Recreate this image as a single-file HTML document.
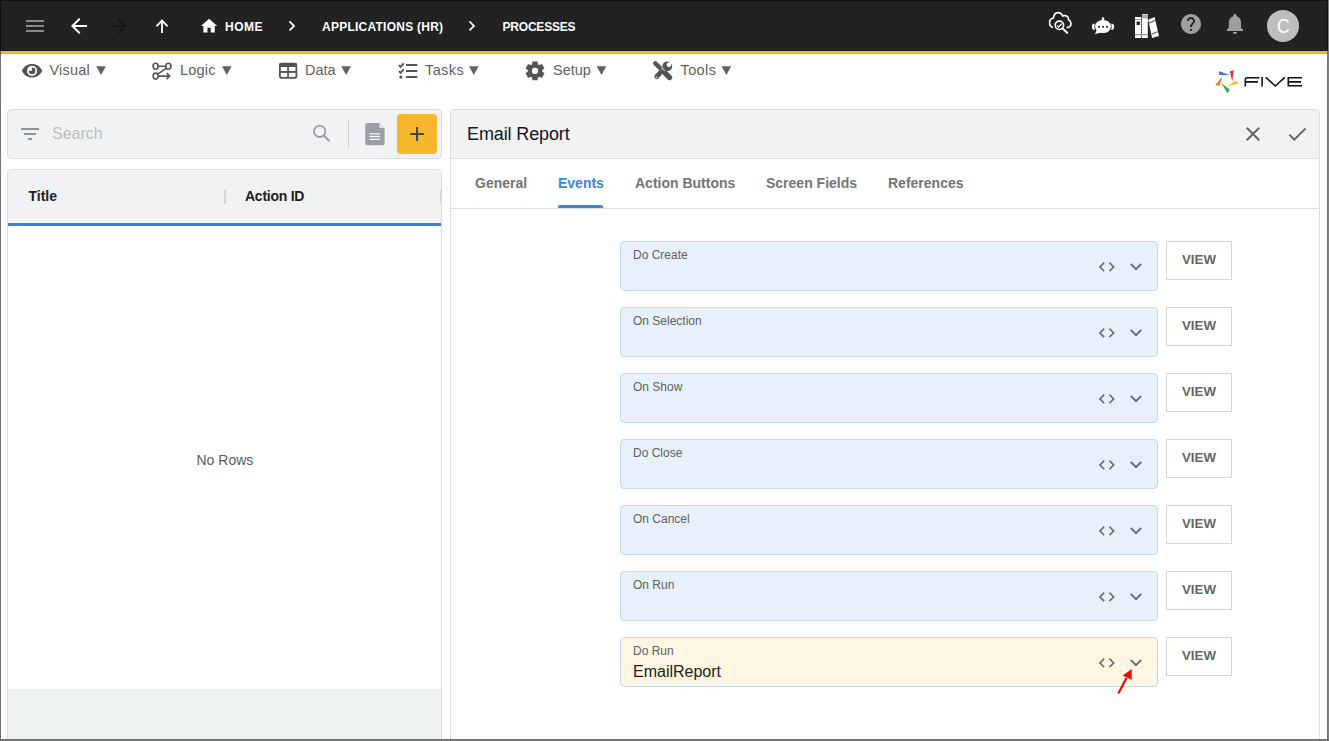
<!DOCTYPE html>
<html><head><meta charset="utf-8">
<style>
*{margin:0;padding:0;box-sizing:border-box}
html,body{width:1329px;height:741px;overflow:hidden;background:#fff;font-family:"Liberation Sans",sans-serif}
.a{position:absolute}
.t{position:absolute;white-space:nowrap;line-height:1}
svg{position:absolute;overflow:visible}
.ov{left:0;top:0}
#hdr{left:0;top:0;width:1329px;height:51px;background:#222}
#hline{left:0;top:50px;width:1329px;height:1px;background:#141820}
#obar{left:0;top:51px;width:1329px;height:3px;background:linear-gradient(#fdbf29,#f2ad18)}
.crumb{color:#fff;font-weight:bold;font-size:12px;top:20.5px}
.menu{color:#616161;font-size:14.5px;top:62.5px}
.field{left:620px;width:538px;height:50px;border:1px solid #c6d9ec;border-radius:4px;background:#e8f1fb}
.flab{left:633px;font-size:12px;color:#616161}
.view{left:1166px;width:66px;height:39px;border:1px solid #d6d6d6;background:#fff}
.vtxt{left:1182px;font-size:13.3px;font-weight:bold;color:#666}
.tab{font-size:14px;font-weight:bold;color:#757575;top:175.5px}
</style></head><body>
<!-- header -->
<div id="hdr" class="a"></div>
<div id="hline" class="a"></div>
<div id="obar" class="a"></div>

<div class="t crumb" style="left:225px;letter-spacing:0.5px">HOME</div>
<div class="t crumb" style="left:322px;letter-spacing:0.25px">APPLICATIONS (HR)</div>
<div class="t crumb" style="left:502.5px;letter-spacing:-0.2px">PROCESSES</div>

<!-- menu -->
<div class="t menu" style="left:49.5px;letter-spacing:0.2px">Visual</div>
<div class="t menu" style="left:180px;letter-spacing:0.2px">Logic</div>
<div class="t menu" style="left:305px">Data</div>
<div class="t menu" style="left:425px;letter-spacing:0.4px">Tasks</div>
<div class="t menu" style="left:553px">Setup</div>
<div class="t menu" style="left:680.5px;letter-spacing:0.4px">Tools</div>

<!-- left panel -->
<div class="a" style="left:7px;top:109px;width:435px;height:50px;background:#f1f2f4;border:1px solid #dcdde0;border-radius:4px"></div>
<div class="t" style="left:52px;top:125.5px;font-size:16px;color:#bdbdbd">Search</div>
<div class="a" style="left:348px;top:120px;width:1px;height:28px;background:#d0d0d0"></div>
<div class="a" style="left:397px;top:114px;width:40px;height:40px;background:#f7b72d;border-radius:4px"></div>

<div class="a" style="left:7px;top:169px;width:435px;height:580px;border:1px solid #dcdde0;border-radius:4px 4px 0 0;background:#fff"></div>
<div class="a" style="left:8px;top:170px;width:433px;height:53px;background:#f1f2f4;border-radius:3px 3px 0 0"></div>
<div class="a" style="left:8px;top:223px;width:433px;height:3px;background:#3b82d4"></div>
<div class="t" style="left:28.5px;top:188.7px;font-size:14px;font-weight:bold;color:#212121">Title</div>
<div class="a" style="left:224px;top:190px;width:2px;height:14px;background:#d5d6d8"></div>
<div class="t" style="left:245px;top:188.7px;font-size:14px;font-weight:bold;color:#212121;letter-spacing:-0.25px">Action ID</div>
<div class="a" style="left:440px;top:190px;width:1px;height:14px;background:#d5d6d8"></div>
<div class="t" style="left:196.5px;top:453px;font-size:14px;color:#5c5c5c">No Rows</div>
<div class="a" style="left:8px;top:689px;width:433px;height:60px;background:#eef2f3"></div>

<!-- right panel -->
<div class="a" style="left:450px;top:109px;width:870px;height:640px;border:1px solid #dcdde0;border-radius:4px 4px 0 0;background:#fff"></div>
<div class="a" style="left:451px;top:110px;width:868px;height:48px;background:#f1f2f4;border-radius:3px 3px 0 0"></div>
<div class="a" style="left:451px;top:158px;width:868px;height:1px;background:#dcdde0"></div>
<div class="a" style="left:451px;top:208px;width:868px;height:1px;background:#dcdde0"></div>
<div class="t" style="left:467px;top:125px;font-size:18px;color:#111827;letter-spacing:-0.12px">Email Report</div>

<div class="t tab" style="left:475px">General</div>
<div class="a" style="left:476.5px;top:204px;width:1px;height:1px;background:#cfe0f5"></div><div class="a" style="left:523.5px;top:204px;width:1px;height:1px;background:#cfe0f5"></div>
<div class="t tab" style="left:558px;color:#3d85d8">Events</div>
<div class="a" style="left:558px;top:205px;width:45px;height:3px;background:#3d85d8;border-radius:2px 2px 0 0"></div>
<div class="t tab" style="left:635px">Action Buttons</div>
<div class="t tab" style="left:766px">Screen Fields</div>
<div class="t tab" style="left:888px">References</div>

<!-- fields -->
<div class="a field" style="top:241px;background:#e8f1fb"></div>
<div class="t flab" style="top:248.7px">Do Create</div>
<div class="a view" style="top:241px"></div>
<div class="t vtxt" style="top:252.9px">VIEW</div>
<div class="a field" style="top:307px;background:#e8f1fb"></div>
<div class="t flab" style="top:314.7px">On Selection</div>
<div class="a view" style="top:307px"></div>
<div class="t vtxt" style="top:318.9px">VIEW</div>
<div class="a field" style="top:373px;background:#e8f1fb"></div>
<div class="t flab" style="top:380.7px">On Show</div>
<div class="a view" style="top:373px"></div>
<div class="t vtxt" style="top:384.9px">VIEW</div>
<div class="a field" style="top:439px;background:#e8f1fb"></div>
<div class="t flab" style="top:446.7px">Do Close</div>
<div class="a view" style="top:439px"></div>
<div class="t vtxt" style="top:450.9px">VIEW</div>
<div class="a field" style="top:505px;background:#e8f1fb"></div>
<div class="t flab" style="top:512.7px">On Cancel</div>
<div class="a view" style="top:505px"></div>
<div class="t vtxt" style="top:516.9px">VIEW</div>
<div class="a field" style="top:571px;background:#e8f1fb"></div>
<div class="t flab" style="top:578.7px">On Run</div>
<div class="a view" style="top:571px"></div>
<div class="t vtxt" style="top:582.9px">VIEW</div>
<div class="a field" style="top:637px;background:#fef5e3"></div>
<div class="t flab" style="top:644.7px">Do Run</div>
<div class="a view" style="top:637px"></div>
<div class="t vtxt" style="top:648.9px">VIEW</div>
<div class="t" style="left:633px;top:663.5px;font-size:16px;color:#212121">EmailReport</div>

<svg class="ov" width="1329" height="741" viewBox="0 0 1329 741"><rect x="26" y="20" width="18" height="2" fill="#8a8a8a"/>
<rect x="26" y="25" width="18" height="2" fill="#8a8a8a"/>
<rect x="26" y="30" width="18" height="2" fill="#8a8a8a"/>
<path transform="translate(67,14)" d="M20 11H7.83l5.59-5.59L12 4l-8 8 8 8 1.41-1.41L7.83 13H20v-2z" fill="#fff"/>
<path transform="translate(107,14)" d="M12 4l-1.41 1.41L16.17 11H4v2h12.17l-5.58 5.59L12 20l8-8z" fill="#161616"/>
<path d="M162 33V20.6M156.4 26.3L162 20.6L167.6 26.3" fill="none" stroke="#fff" stroke-width="1.8"/>
<path transform="translate(199.3,16.25) scale(0.815)" d="M10 20v-6h4v6h5v-8h3L12 3 2 12h3v8z" fill="#fff"/>
<path transform="translate(281.6,15.7) scale(0.85)" d="M10 6L8.59 7.41 13.17 12l-4.58 4.59L10 18l6-6z" fill="#fff"/>
<path transform="translate(461.6,15.7) scale(0.85)" d="M10 6L8.59 7.41 13.17 12l-4.58 4.59L10 18l6-6z" fill="#fff"/>
<path d="M1053 27.6C1050.9 27 1049.6 25 1049.6 22.6C1049.6 20.2 1051.2 18.4 1053.4 18C1053.8 14.6 1055.6 12.6 1058 12.6C1060.3 12.6 1062 14 1062.8 16C1063.5 15.6 1064.2 15.5 1065 15.6C1067.3 15.9 1068.6 17.8 1068.6 19.8C1070.1 20.6 1071 22.2 1071 23.8C1071 25.9 1069.4 27.5 1066.6 27.7" fill="none" stroke="#fff" stroke-width="1.6"/>
<circle cx="1059.4" cy="25.3" r="4.2" fill="#222" stroke="#fff" stroke-width="1.6"/>
<path d="M1062.4 28.3L1067.2 32.8" stroke="#fff" stroke-width="1.9" stroke-linecap="round"/>
<path d="M1057.1 25.5L1058.7 27.1L1061.7 23.7" fill="none" stroke="#fff" stroke-width="1.3"/>
<ellipse cx="1103" cy="26.5" rx="7.9" ry="6.6" fill="#fff"/>
<path d="M1096.8 29.8L1095 34.2L1100.5 32.6z" fill="#fff"/>
<circle cx="1103" cy="18.6" r="1.3" fill="#fff"/><path d="M1102.2 19L1103.8 19L1104.4 20.4L1101.6 20.4z" fill="#fff"/>
<path d="M1094.7 23.4Q1091.9 23.4 1091.9 26.7Q1091.9 30 1094.7 30Q1094.2 26.7 1094.7 23.4z" fill="#fff"/><path d="M1111.3 23.4Q1114.1 23.4 1114.1 26.7Q1114.1 30 1111.3 30Q1111.8 26.7 1111.3 23.4z" fill="#fff"/>
<rect x="1098.1999999999998" y="25.9" width="1.8" height="1.8" fill="#222"/>
<rect x="1102.1" y="25.9" width="1.8" height="1.8" fill="#222"/>
<rect x="1106.0" y="25.9" width="1.8" height="1.8" fill="#222"/>
<rect x="1135" y="17" width="6.3" height="21" fill="#fff"/>
<rect x="1135" y="19.2" width="6.3" height="0.6" fill="#555"/>
<rect x="1136.6" y="21.5" width="3.3" height="3.5" fill="#222"/>
<rect x="1135" y="33.9" width="12.8" height="1.4" fill="#999"/>
<rect x="1142" y="14" width="5.8" height="24" fill="#fff"/>
<rect x="1142" y="14.6" width="5.8" height="3.8" fill="#aaa"/>
<rect x="1142" y="33.9" width="5.8" height="1.4" fill="#999"/>
<path d="M1148.2 19.7L1154.5 17L1159 36L1152.1 38z" fill="#fff"/>
<path d="M1148.9 22.4L1155.1 19.9L1155.4 21.1L1149.2 23.6z" fill="#555"/>
<path d="M1151.6 33.6L1157.8 31.1L1158.1 32.3L1151.9 34.8z" fill="#777"/>
<path transform="translate(1179,12)" d="M12 2C6.48 2 2 6.48 2 12s4.48 10 10 10 10-4.48 10-10S17.52 2 12 2zm1 17h-2v-2h2v2zm2.07-7.75l-.9.92C13.45 12.9 13 13.5 13 15h-2v-.5c0-1.1.45-2.1 1.17-2.83l1.24-1.26c.37-.36.59-.86.59-1.41 0-1.1-.9-2-2-2s-2 .9-2 2H8c0-2.21 1.79-4 4-4s4 1.79 4 4c0 .88-.36 1.68-.93 2.25z" fill="#9e9e9e"/>
<path transform="translate(1222.7,11.5) scale(1.02)" d="M12 22c1.1 0 2-.9 2-2h-4c0 1.1.89 2 2 2zm6-6v-5c0-3.07-1.64-5.64-4.5-6.32V4c0-.83-.67-1.5-1.5-1.5s-1.5.67-1.5 1.5v.68C7.63 5.36 6 7.92 6 11v5l-2 2v1h16v-1l-2-2z" fill="#9e9e9e"/>
<circle cx="1283" cy="25.9" r="16" fill="#bdbdbd"/>
<path d="M21.9 70.85C23.6 66.8 27.5 64.1 32.05 64.1S40.5 66.8 42.2 70.85C40.5 74.9 36.6 77.6 32.05 77.6S23.6 74.9 21.9 70.85zM37.15 70.85A5.1 5.1 0 1 0 26.95 70.85A5.1 5.1 0 1 0 37.15 70.85z" fill="#545454" fill-rule="evenodd"/>
<path d="M32.05 67.45A3.4 3.4 0 1 1 28.65 70.85L32.05 70.85z" fill="#545454"/>
<ellipse cx="155.6" cy="66.3" rx="2.5" ry="3" fill="none" stroke="#545454" stroke-width="1.6"/>
<ellipse cx="168.4" cy="66.3" rx="2.5" ry="3" fill="none" stroke="#545454" stroke-width="1.6"/>
<ellipse cx="155.6" cy="76.1" rx="2.5" ry="3" fill="none" stroke="#545454" stroke-width="1.6"/>
<path d="M158.1 66.3H165.9M166.4 68.2L157.4 74.3M158.1 76.1H169.4M166.6 73L169.7 76.1L166.6 79.2" fill="none" stroke="#545454" stroke-width="1.6"/>
<rect x="279.9" y="63.7" width="16.5" height="14.2" rx="2" fill="none" stroke="#545454" stroke-width="1.8"/>
<rect x="279.5" y="63.2" width="17.4" height="3.8" fill="#545454"/>
<rect x="287.2" y="66" width="1.7" height="12" fill="#545454"/>
<rect x="280" y="71" width="16.5" height="1.9" fill="#545454"/>
<path d="M398.9 65.2L400.6 66.9L403.8 63.4" fill="none" stroke="#545454" stroke-width="1.9"/>
<path d="M398.9 71.10000000000001L400.6 72.80000000000001L403.8 69.3" fill="none" stroke="#545454" stroke-width="1.9"/>
<circle cx="400.9" cy="77.1" r="1.6" fill="#545454"/>
<rect x="406" y="64" width="11.3" height="2" fill="#545454"/>
<rect x="406" y="70" width="11.3" height="2" fill="#545454"/>
<rect x="406" y="76" width="11.3" height="2" fill="#545454"/>
<path d="M532.16 64.18L532.39 61.46L537.61 61.46L537.84 64.18A7.3 7.3 0 0 1 539.40 65.08L541.87 63.91L544.49 68.44L542.24 70.00A7.3 7.3 0 0 1 542.24 71.80L544.49 73.36L541.87 77.89L539.40 76.72A7.3 7.3 0 0 1 537.84 77.62L537.61 80.34L532.39 80.34L532.16 77.62A7.3 7.3 0 0 1 530.60 76.72L528.13 77.89L525.51 73.36L527.76 71.80A7.3 7.3 0 0 1 527.76 70.00L525.51 68.44L528.13 63.91L530.60 65.08A7.3 7.3 0 0 1 532.16 64.18zM538.1 70.9A3.1 3.1 0 1 0 531.9 70.9A3.1 3.1 0 1 0 538.1 70.9z" fill="#545454" fill-rule="evenodd"/>
<circle cx="667.3" cy="66.3" r="4.9" fill="#545454"/>
<circle cx="668.9" cy="64.7" r="2.3" fill="#fff"/>
<path d="M668.2 63.2L672.2 59.2L674.4 61.4L670.4 65.4z" fill="#fff"/>
<path d="M655.3 63.3L659.6 67.6" stroke="#545454" stroke-width="4.4" stroke-linecap="round"/>
<path d="M659.6 67.6L665 73" stroke="#545454" stroke-width="1.7"/>
<path d="M665.4 73.4L669.5 77.5" stroke="#545454" stroke-width="5.4" stroke-linecap="round"/>
<path d="M661.2 71.6L656.7 76.6" stroke="#545454" stroke-width="4.8" stroke-linecap="round"/>
<circle cx="656.4" cy="77.2" r="1" fill="#c8c8c8"/>
<path d="M96.3 66.2H105.89999999999999L101.1 75z" fill="#616161"/>
<path d="M222 66.2H231.6L226.8 75z" fill="#616161"/>
<path d="M341.3 66.2H350.90000000000003L346.1 75z" fill="#616161"/>
<path d="M469 66.2H478.6L473.8 75z" fill="#616161"/>
<path d="M596.7 66.2H606.3000000000001L601.5 75z" fill="#616161"/>
<path d="M721.6 66.2H731.2L726.4 75z" fill="#616161"/>
<path d="M1218.8 71.1L1229.5 75L1219.2 75z" fill="#3b7dd8"/>
<path d="M1233.8 69.9L1232.3 81.4L1229.9 71.5z" fill="#e0303a"/>
<path d="M1222.4 76.2L1219.6 85.7L1215.3 85.3z" fill="#f47b20"/>
<path d="M1235.4 80.8L1239 83.3L1227.5 86.6z" fill="#f7bb2a"/>
<path d="M1221.2 82.9L1229.9 89.7L1227.5 93.2z" fill="#3ba54a"/>
<path d="M1259.5 77.8H1246.8Q1245.3 77.8 1245.3 79.3V86.5M1245.3 81.9H1258M1262.1 77V86.5M1265.8 77.3L1275.3 86L1284.8 77.3M1302 77.8H1288.3V85.7H1302M1288.3 81.9H1301" fill="none" stroke="#111" stroke-width="1.6"/>
<path transform="translate(18,122)" d="M10 18h4v-2h-4v2zM3 6v2h18V6H3zm3 7h12v-2H6v2z" fill="#8d949a"/>
<circle cx="319.7" cy="131.3" r="5.7" fill="none" stroke="#9aa0a6" stroke-width="1.8"/>
<path d="M323.9 135.6L329 140.8" stroke="#9aa0a6" stroke-width="2" stroke-linecap="round"/>
<path d="M367.2 122.9H379.5L384.5 127.9V143.3Q384.5 145.3 382.5 145.3H367.2Q365.2 145.3 365.2 143.3V124.9Q365.2 122.9 367.2 122.9z" fill="#9aa0a6"/>
<path d="M379.5 122.9V127.9H384.5z" fill="#e8eaec"/>
<rect x="369.5" y="133.20000000000002" width="10.5" height="1.2" fill="#fff"/>
<rect x="369.5" y="135.9" width="10.5" height="1.2" fill="#fff"/>
<rect x="369.5" y="138.8" width="10.5" height="1.2" fill="#fff"/>
<path d="M410.2 133.95H423.9M417.05 127V140.9" stroke="#3f4450" stroke-width="2"/>
<path transform="translate(1241,122)" d="M19 6.41L17.59 5 12 10.59 6.41 5 5 6.41 10.59 12 5 17.59 6.41 19 12 13.41 17.59 19 19 17.59 13.41 12z" fill="#666"/>
<path transform="translate(1285.3,122.1)" d="M9 16.17L4.83 12l-1.42 1.41L9 19 21 7l-1.41-1.41z" fill="#666"/>
<path d="M1118.3 693.6L1126.5 678" stroke="#f00" stroke-width="2.2"/>
<path d="M1131.7 669.1L1122.8 675.6L1131.7 679.8z" fill="#f00"/>
<path transform="translate(1097.2,257.3) scale(0.8)" d="M9.4 16.6L4.8 12l4.6-4.6L8 6l-6 6 6 6 1.4-1.4zm5.2 0l4.6-4.6-4.6-4.6L16 6l6 6-6 6-1.4-1.4z" fill="#6b6b6b"/>
<path transform="translate(1124,254.6)" d="M16.59 8.59L12 13.17 7.41 8.59 6 10l6 6 6-6z" fill="#6b6b6b"/>
<path transform="translate(1097.2,323.3) scale(0.8)" d="M9.4 16.6L4.8 12l4.6-4.6L8 6l-6 6 6 6 1.4-1.4zm5.2 0l4.6-4.6-4.6-4.6L16 6l6 6-6 6-1.4-1.4z" fill="#6b6b6b"/>
<path transform="translate(1124,320.6)" d="M16.59 8.59L12 13.17 7.41 8.59 6 10l6 6 6-6z" fill="#6b6b6b"/>
<path transform="translate(1097.2,389.3) scale(0.8)" d="M9.4 16.6L4.8 12l4.6-4.6L8 6l-6 6 6 6 1.4-1.4zm5.2 0l4.6-4.6-4.6-4.6L16 6l6 6-6 6-1.4-1.4z" fill="#6b6b6b"/>
<path transform="translate(1124,386.6)" d="M16.59 8.59L12 13.17 7.41 8.59 6 10l6 6 6-6z" fill="#6b6b6b"/>
<path transform="translate(1097.2,455.3) scale(0.8)" d="M9.4 16.6L4.8 12l4.6-4.6L8 6l-6 6 6 6 1.4-1.4zm5.2 0l4.6-4.6-4.6-4.6L16 6l6 6-6 6-1.4-1.4z" fill="#6b6b6b"/>
<path transform="translate(1124,452.6)" d="M16.59 8.59L12 13.17 7.41 8.59 6 10l6 6 6-6z" fill="#6b6b6b"/>
<path transform="translate(1097.2,521.3) scale(0.8)" d="M9.4 16.6L4.8 12l4.6-4.6L8 6l-6 6 6 6 1.4-1.4zm5.2 0l4.6-4.6-4.6-4.6L16 6l6 6-6 6-1.4-1.4z" fill="#6b6b6b"/>
<path transform="translate(1124,518.6)" d="M16.59 8.59L12 13.17 7.41 8.59 6 10l6 6 6-6z" fill="#6b6b6b"/>
<path transform="translate(1097.2,587.3) scale(0.8)" d="M9.4 16.6L4.8 12l4.6-4.6L8 6l-6 6 6 6 1.4-1.4zm5.2 0l4.6-4.6-4.6-4.6L16 6l6 6-6 6-1.4-1.4z" fill="#6b6b6b"/>
<path transform="translate(1124,584.6)" d="M16.59 8.59L12 13.17 7.41 8.59 6 10l6 6 6-6z" fill="#6b6b6b"/>
<path transform="translate(1097.2,653.3) scale(0.8)" d="M9.4 16.6L4.8 12l4.6-4.6L8 6l-6 6 6 6 1.4-1.4zm5.2 0l4.6-4.6-4.6-4.6L16 6l6 6-6 6-1.4-1.4z" fill="#6b6b6b"/>
<path transform="translate(1124,650.6)" d="M16.59 8.59L12 13.17 7.41 8.59 6 10l6 6 6-6z" fill="#6b6b6b"/></svg>
<div class="t" style="left:1276.5px;top:16.2px;font-size:20px;color:#fff;transform:scaleX(0.88);transform-origin:0 0">C</div>
<!-- frame -->
<div class="a" style="left:0;top:0;width:1329px;height:1px;background:#111"></div>
<div class="a" style="left:0;top:0;width:1px;height:51px;background:#111"></div>
<div class="a" style="left:0;top:51px;width:1px;height:3px;background:#7a5a14"></div>
<div class="a" style="left:0;top:54px;width:1px;height:687px;background:#737373"></div>
<div class="a" style="left:1327px;top:0;width:1px;height:51px;background:#111"></div>
<div class="a" style="left:1327px;top:51px;width:1px;height:690px;background:#737373"></div>
<div class="a" style="left:1328px;top:0;width:1px;height:741px;background:#808080"></div>
<div class="a" style="left:0;top:739px;width:1329px;height:2px;background:#737373"></div>
</body></html>
